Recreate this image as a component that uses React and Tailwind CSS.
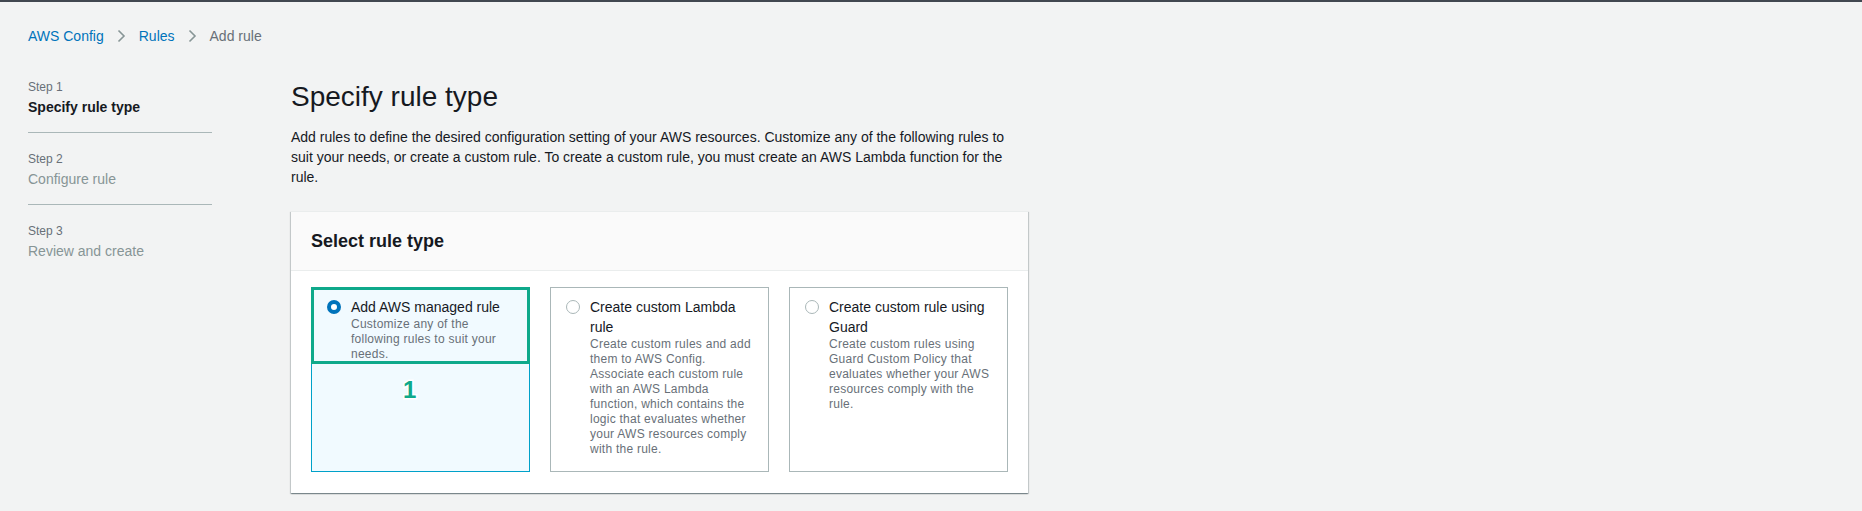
import React from "react";

const steps = [
  { label: "Step 1", title: "Specify rule type", active: true },
  { label: "Step 2", title: "Configure rule" },
  { label: "Step 3", title: "Review and create" },
];

const ruleTypes = [
  {
    id: "managed",
    title: "Add AWS managed rule",
    desc: "Customize any of the following rules to suit your needs.",
    selected: true,
  },
  {
    id: "lambda",
    title: "Create custom Lambda rule",
    desc: "Create custom rules and add them to AWS Config. Associate each custom rule with an AWS Lambda function, which contains the logic that evaluates whether your AWS resources comply with the rule.",
  },
  {
    id: "guard",
    title: "Create custom rule using Guard",
    desc: "Create custom rules using Guard Custom Policy that evaluates whether your AWS resources comply with the rule.",
  },
];

function Chevron() {
  return (
    <svg width="9" height="14" viewBox="0 0 9 14" className="mx-[13px] shrink-0">
      <polyline
        points="1.5,1.5 7,7 1.5,12.5"
        fill="none"
        stroke="#879596"
        strokeWidth="1.6"
      />
    </svg>
  );
}

function Radio({ checked }) {
  return checked ? (
    <span className="mt-[3px] block h-[14px] w-[14px] shrink-0 rounded-full border-[4px] border-[#0073bb] bg-white" />
  ) : (
    <span className="mt-[3px] block h-[14px] w-[14px] shrink-0 rounded-full border-[1.5px] border-[#aab7b8] bg-white" />
  );
}

export default function App() {
  return (
    <div className="min-h-screen w-full bg-[#f2f3f3] font-['Liberation_Sans',Arial,sans-serif]">
      <div className="h-[2px] w-full bg-[#414750]" />

      {/* BREADCRUMB */}
      <nav className="flex items-center pl-[28px] pt-[24px] text-[14px] leading-[20px]">
        <span className="text-[#0073bb]">AWS Config</span>
        <Chevron />
        <span className="text-[#0073bb]">Rules</span>
        <Chevron />
        <span className="text-[#687078]">Add rule</span>
      </nav>

      <div className="mt-[33px] flex pl-[28px]">
        {/* STEPS */}
        <div className="w-[184px] shrink-0">
          {steps.map((s, i) => (
            <div
              key={s.label}
              className={`${i > 0 ? "pt-[18px]" : ""} ${
                i < steps.length - 1 ? "border-b border-[#aab7b8] pb-[15px]" : ""
              }`}
            >
              <div className="text-[12px] leading-[16px] text-[#687078]">
                {s.label}
              </div>
              <div
                className={`mt-[2px] text-[14px] leading-[20px] ${
                  s.active ? "font-bold text-[#16191f]" : "text-[#879596]"
                }`}
              >
                {s.title}
              </div>
            </div>
          ))}
        </div>

        {/* MAIN */}
        <div className="ml-[79px] w-[737px]">
          <h1 className="text-[28px] font-normal leading-[36px] text-[#16191f]">
            Specify rule type
          </h1>
          <p className="mt-[12px] text-[14px] leading-[20px] text-[#16191f]">
            Add rules to define the desired configuration setting of your AWS
            resources. Customize any of the following rules to suit your needs,
            or create a custom rule. To create a custom rule, you must create an
            AWS Lambda function for the rule.
          </p>

          <div className="mt-[24px] border-t border-[#eaeded] bg-white shadow-[0_1px_1px_0_rgba(0,28,36,0.3),1px_1px_1px_0_rgba(0,28,36,0.15),-1px_1px_1px_0_rgba(0,28,36,0.15)]">
            <div className="border-b border-[#eaeded] bg-[#fafafa] px-[20px] py-[18px]">
              <h2 className="text-[18px] font-bold leading-[22px] text-[#16191f]">
                Select rule type
              </h2>
            </div>

            <div className="grid grid-cols-3 gap-[20px] px-[20px] pb-[21px] pt-[16px]">
              {ruleTypes.map((r) => (
                <div
                  key={r.id}
                  className={`relative flex gap-[10px] border pb-[14px] pl-[15px] pr-[14px] pt-[9px] ${
                    r.selected
                      ? "border-[#00a1c9] bg-[#f1faff]"
                      : "border-[#aab7b8] bg-white"
                  }`}
                >
                  <Radio checked={r.selected} />
                  <div>
                    <div className="text-[14px] leading-[20px] text-[#16191f]">
                      {r.title}
                    </div>
                    <div className="text-[12px] leading-[15px] tracking-[0.25px] text-[#687078]">
                      {r.desc}
                    </div>
                  </div>

                  {r.selected && (
                    <>
                      <div className="absolute left-[-1px] right-[-1px] top-[-1px] h-[77px] border-[3px] border-[#0fa98b]" />
                      <div className="absolute left-[91px] top-[88px] text-[24px] font-bold leading-[28px] text-[#0fa98b] [-webkit-text-stroke:3px_white] [paint-order:stroke_fill]">
                        1
                      </div>
                    </>
                  )}
                </div>
              ))}
            </div>
          </div>
        </div>
      </div>
    </div>
  );
}
